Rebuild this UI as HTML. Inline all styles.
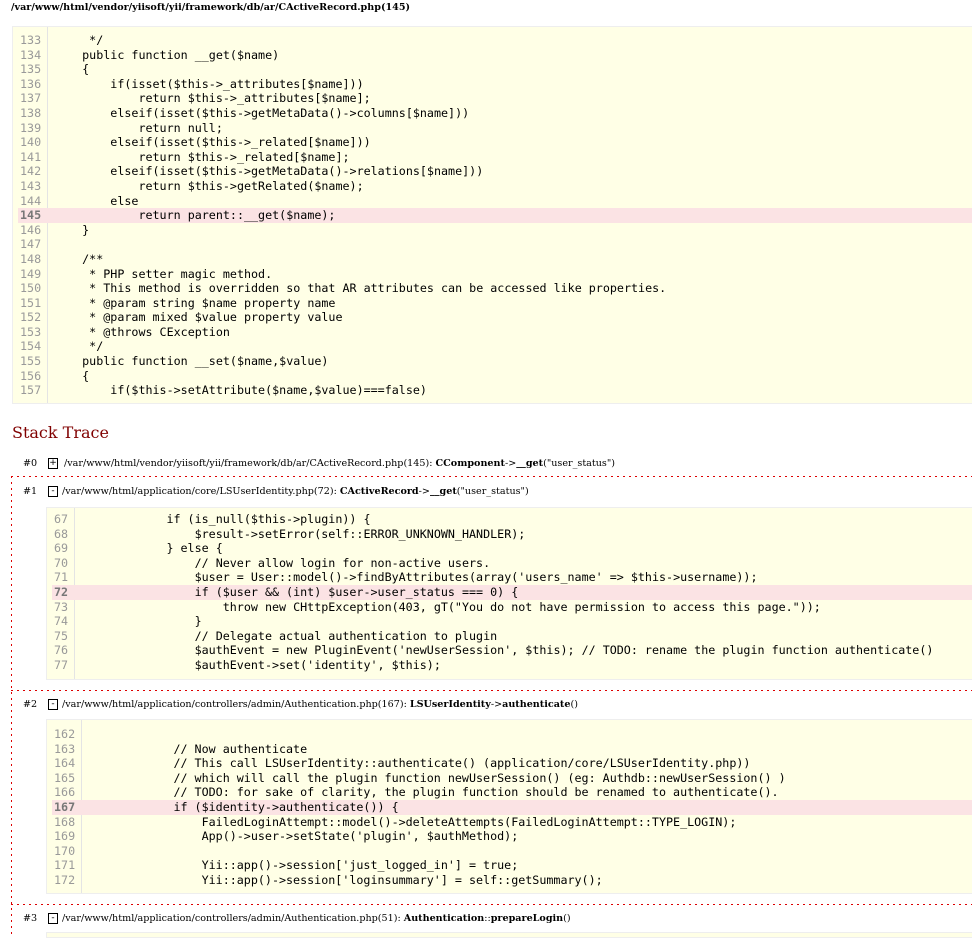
<!DOCTYPE html>
<html><head><meta charset="utf-8"><style>
html,body{margin:0;height:938px;overflow:hidden}
body{background:#fff;width:972px;position:relative;font-family:"DejaVu Serif",serif;color:#000}
.h{position:absolute;left:11px;top:2px;font-size:9.6px;font-weight:bold}
.code{position:absolute;background:#ffffe6;border:1px solid #eee;right:-10px;font-family:"DejaVu Sans Mono",monospace;font-size:11.7px}
.ln{position:relative;height:14.6px;line-height:14.6px;white-space:pre}
.ln .n{position:absolute;left:6px;color:#999;text-align:right;padding-left:1px}
.ln .c{position:absolute;white-space:pre;color:#000}
.ln.hl{background:#fbe3e4;margin-left:5px}
.ln.hl .n{left:1px;font-weight:bold;color:#777}
.ln.hl .c{margin-left:-5px}
.div{position:absolute;top:0;bottom:0;border-left:1px solid #e4e4e4}
.st{position:absolute;left:12px;top:423px;font-size:16px;color:#800000}
.tr{position:absolute;font-size:9.6px;white-space:pre}
.num{position:absolute;font-size:9.6px}
.box{position:absolute;width:8px;height:9px;border:1px solid #000;font-size:9px;line-height:8px;text-align:center;font-family:"DejaVu Sans",sans-serif}
.rd{position:absolute;left:11px;right:0;height:1px;background:repeating-linear-gradient(to right,#d00 0 2px,transparent 2px 6px)}
.rl{position:absolute;left:11px;top:476px;bottom:0;width:1px;background:repeating-linear-gradient(to bottom,#d00 0 2px,transparent 2px 6px)}
</style></head><body>
<div class="h">/var/www/html/vendor/yiisoft/yii/framework/db/ar/CActiveRecord.php(145)</div>

<div class="code" style="left:12px;top:26px;height:370px;padding-top:6px">
<div class="div" style="left:34px"></div>
<div id="b1"></div>
</div>

<div class="st">Stack Trace</div>

<div class="num" style="left:23px;top:458px">#0</div>
<div class="box" style="left:48px;top:458px">+</div>
<div class="tr" style="left:64px;top:458px">/var/www/html/vendor/yiisoft/yii/framework/db/ar/CActiveRecord.php(145): <b>CComponent</b>-&gt;<b>__get</b>("user_status")</div>

<div class="rd" style="top:476px"></div>
<div class="rl"></div>

<div class="num" style="left:23px;top:486px">#1</div>
<div class="box" style="left:48px;top:486px">-</div>
<div class="tr" style="left:62px;top:486px">/var/www/html/application/core/LSUserIdentity.php(72): <b>CActiveRecord</b>-&gt;<b>__get</b>("user_status")</div>
<div class="code" style="left:46px;top:507px;height:167px;padding-top:4px">
<div class="div" style="left:27px"></div>
<div id="b2"></div>
</div>

<div class="rd" style="top:690px"></div>
<div class="num" style="left:23px;top:699px">#2</div>
<div class="box" style="left:48px;top:699px">-</div>
<div class="tr" style="left:62px;top:699px">/var/www/html/application/controllers/admin/Authentication.php(167): <b>LSUserIdentity</b>-&gt;<b>authenticate</b>()</div>
<div class="code" style="left:46px;top:719px;height:166px;padding-top:7px">
<div class="div" style="left:34px"></div>
<div id="b3"></div>
</div>

<div class="rd" style="top:904px"></div>
<div class="num" style="left:23px;top:913px">#3</div>
<div class="box" style="left:48px;top:913px">-</div>
<div class="tr" style="left:62px;top:913px">/var/www/html/application/controllers/admin/Authentication.php(51): <b>Authentication</b>::<b>prepareLogin</b>()</div>
<div class="code" style="left:46px;top:932px;height:4px"></div>

<script>
function fill(id,start,hl,codeLeft,lines){
 var el=document.getElementById(id),h='';
 lines.forEach(function(t,i){
  var n=start+i;
  var e=t.replace(/&/g,'&amp;').replace(/</g,'&lt;').replace(/>/g,'&gt;');
  h+='<div class="ln'+(n==hl?' hl':'')+'"><span class="n">'+n+'</span><span class="c" style="left:'+codeLeft+'px">'+e+'</span></div>';
 });
 el.innerHTML=h;
}
fill('b1',133,145,41,[
"     */",
"    public function __get($name)",
"    {",
"        if(isset($this->_attributes[$name]))",
"            return $this->_attributes[$name];",
"        elseif(isset($this->getMetaData()->columns[$name]))",
"            return null;",
"        elseif(isset($this->_related[$name]))",
"            return $this->_related[$name];",
"        elseif(isset($this->getMetaData()->relations[$name]))",
"            return $this->getRelated($name);",
"        else",
"            return parent::__get($name);",
"    }",
"",
"    /**",
"     * PHP setter magic method.",
"     * This method is overridden so that AR attributes can be accessed like properties.",
"     * @param string $name property name",
"     * @param mixed $value property value",
"     * @throws CException",
"     */",
"    public function __set($name,$value)",
"    {",
"        if($this->setAttribute($name,$value)===false)"
]);
fill('b2',67,72,35,[
"            if (is_null($this->plugin)) {",
"                $result->setError(self::ERROR_UNKNOWN_HANDLER);",
"            } else {",
"                // Never allow login for non-active users.",
"                $user = User::model()->findByAttributes(array('users_name' => $this->username));",
"                if ($user && (int) $user->user_status === 0) {",
"                    throw new CHttpException(403, gT(\"You do not have permission to access this page.\"));",
"                }",
"                // Delegate actual authentication to plugin",
"                $authEvent = new PluginEvent('newUserSession', $this); // TODO: rename the plugin function authenticate()",
"                $authEvent->set('identity', $this);"
]);
fill('b3',162,167,42,[
"",
"            // Now authenticate",
"            // This call LSUserIdentity::authenticate() (application/core/LSUserIdentity.php))",
"            // which will call the plugin function newUserSession() (eg: Authdb::newUserSession() )",
"            // TODO: for sake of clarity, the plugin function should be renamed to authenticate().",
"            if ($identity->authenticate()) {",
"                FailedLoginAttempt::model()->deleteAttempts(FailedLoginAttempt::TYPE_LOGIN);",
"                App()->user->setState('plugin', $authMethod);",
"",
"                Yii::app()->session['just_logged_in'] = true;",
"                Yii::app()->session['loginsummary'] = self::getSummary();"
]);
</script>
</body></html>
